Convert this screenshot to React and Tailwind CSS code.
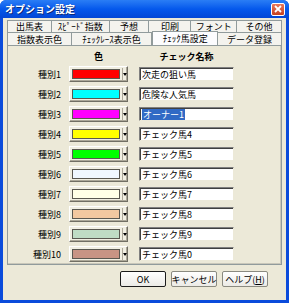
import React from "react";

const JP = { fontFamily: '"Noto Sans CJK JP", "Noto Sans", sans-serif' };

const tabsTop = [
  { label: "出馬表", w: 44 },
  { label: "ｽﾋﾟｰﾄﾞ指数", w: 58 },
  { label: "予想", w: 40 },
  { label: "印刷", w: 42 },
  { label: "フォント", w: 46 },
  { label: "その他", w: 45 },
];

const tabsBottom = [
  { label: "指数表示色", w: 64 },
  { label: "ﾁｪｯｸﾚｰｽ表示色", w: 81 },
  { label: "ﾁｪｯｸ馬設定", w: 66, active: true },
  { label: "データ登録", w: 64 },
];

const rows = [
  { n: 1, color: "#FF0000", name: "次走の狙い馬" },
  { n: 2, color: "#00FFFF", name: "危険な人気馬" },
  { n: 3, color: "#FF00FF", name: "オーナー1", selected: true },
  { n: 4, color: "#FFFF00", name: "チェック馬4" },
  { n: 5, color: "#00FF00", name: "チェック馬5" },
  { n: 6, color: "#F0F8FF", name: "チェック馬6" },
  { n: 7, color: "#FFFFE6", name: "チェック馬7" },
  { n: 8, color: "#F2C8A0", name: "チェック馬8" },
  { n: 9, color: "#BFDCC4", name: "チェック馬9" },
  { n: 10, color: "#C89484", name: "チェック馬0" },
];

function Tab({ label, w, active }) {
  return (
    <div
      style={{ width: w }}
      className={
        "flex items-center justify-center border-t border-r border-[#919B9C] text-[9px] leading-none text-black whitespace-nowrap overflow-hidden " +
        (active ? "bg-[#FCFCFE] h-[14px] -mt-[1px] border-l" : "bg-[#F4F3EE] h-full")
      }
    >
      {label}
    </div>
  );
}

function ColorButton({ color }) {
  return (
    <div className="w-[59px] h-[16px] flex items-center bg-[#F1EFE2] border border-t-white border-l-white border-r-[#716F64] border-b-[#716F64] shadow-[inset_-1px_-1px_0_#ACA899]">
      <div
        className="ml-[2px] w-[48px] h-[10px] border border-[#5A5850]"
        style={{ backgroundColor: color }}
      />
      <div className="ml-[2px] h-[12px] border-l border-[#ACA899] flex-1 flex items-center justify-center">
        <div className="w-0 h-0 border-l-[2px] border-r-[2px] border-t-[3px] border-l-transparent border-r-transparent border-t-black" />
      </div>
    </div>
  );
}

function TextBox({ value, selected }) {
  return (
    <div className="w-[95px] h-[14px] bg-white border border-t-[#808080] border-l-[#808080] border-r-[#ECE9D8] border-b-[#ECE9D8] shadow-[inset_1px_1px_0_#404040] flex items-center pl-[2px] text-[9px] leading-none text-black overflow-hidden whitespace-nowrap">
      {selected ? (
        <span className="bg-[#316AC5] text-white px-[1px] py-[1px]">{value}</span>
      ) : (
        value
      )}
    </div>
  );
}

function DlgButton({ children, primary }) {
  return (
    <div
      className={
        "w-[46px] h-[16px] flex items-center justify-center text-[9px] leading-none text-black whitespace-nowrap rounded-[2px] bg-linear-to-b from-white to-[#ECEBE6] border " +
        (primary ? "border-[#1C1C1C]" : "border-[#8A8A80]")
      }
    >
      {children}
    </div>
  );
}

export default function App() {
  return (
    <div style={JP} className="w-[289px] h-[303px] bg-[#0A4BDB] flex flex-col rounded-t-[6px] overflow-hidden">
      {/* TITLE */}
      <div className="h-[18px] flex items-center justify-between pl-[5px] pr-[4px] bg-linear-to-b from-[#2A7DF5] via-[#0558EC] to-[#0347D6]">
        <span className="text-white text-[10px] font-bold leading-none [text-shadow:1px_1px_0_#0A2A7A]">
          オプション設定
        </span>
        <div className="w-[14px] h-[13px] rounded-[2px] border border-white bg-linear-to-b from-[#E9775A] to-[#C5401E] flex items-center justify-center">
          <svg width="8" height="8" viewBox="0 0 8 8">
            <path d="M1 1 L7 7 M7 1 L1 7" stroke="white" strokeWidth="1.8" />
          </svg>
        </div>
      </div>

      {/* BODY */}
      <div className="mx-[3px] mb-[3px] flex-1 bg-[#ECE9D8] flex flex-col px-[4px] pt-[2px]">
        {/* TABS */}
        <div className="flex h-[12px] border-l border-[#919B9C]">
          {tabsTop.map((t) => (
            <Tab key={t.label} {...t} />
          ))}
        </div>
        <div className="flex h-[13px] items-end border-l border-[#919B9C] relative z-10">
          {tabsBottom.map((t) => (
            <Tab key={t.label} {...t} />
          ))}
        </div>

        {/* PANEL */}
        <div className="h-[220px] border border-[#919B9C] shadow-[inset_-1px_-1px_0_#C9C7BA] bg-[#ECE9D8] pt-[4px]">
          <div className="flex h-[12px] items-center text-[9px] font-bold leading-none text-black">
            <div className="w-[61px]" />
            <div className="w-[59px] text-center">色</div>
            <div className="w-[11px]" />
            <div className="w-[95px] text-center">チェック名称</div>
          </div>
          <div className="mt-[2px] flex flex-col">
            {rows.map((r) => (
              <div key={r.n} className="h-[20px] flex items-center">
                <div className="w-[53px] text-right text-[9px] leading-none text-black">
                  種別{r.n}
                </div>
                <div className="ml-[8px]">
                  <ColorButton color={r.color} />
                </div>
                <div className="ml-[11px]">
                  <TextBox value={r.name} selected={r.selected} />
                </div>
              </div>
            ))}
          </div>
        </div>

        {/* BUTTONS */}
        <div className="mt-[6px] flex justify-end gap-[5px] pr-[14px]">
          <DlgButton primary>OK</DlgButton>
          <DlgButton>キャンセル</DlgButton>
          <DlgButton>
            ヘルプ(<span className="underline">H</span>)
          </DlgButton>
        </div>
      </div>
    </div>
  );
}
